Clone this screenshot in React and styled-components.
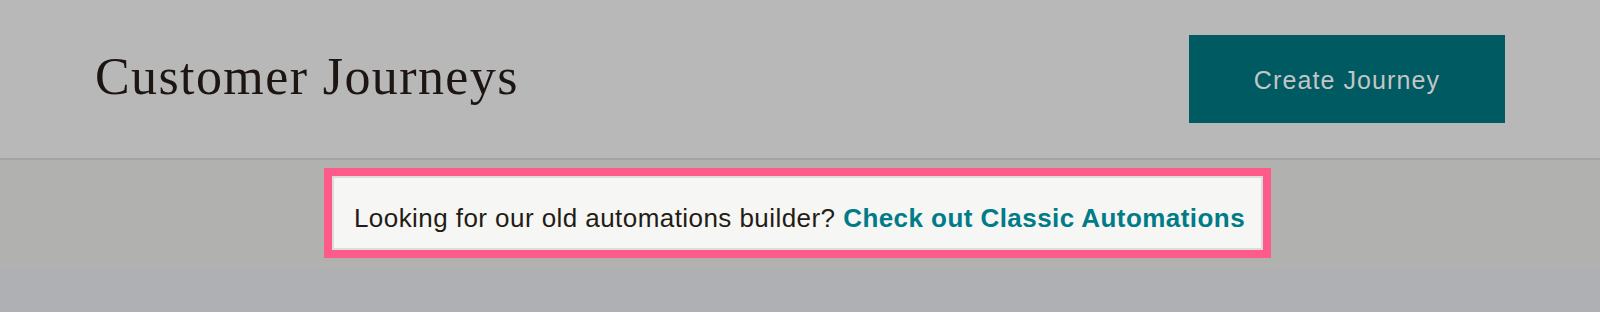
import React from "react";
import styled, { createGlobalStyle } from "styled-components";

const GlobalStyle = createGlobalStyle`
  html, body {
    margin: 0;
    padding: 0;
    background: #aeb0b4;
  }
  body {
    font-family: "Liberation Sans", Arial, sans-serif;
  }
`;

const Page = styled.div`
  width: 1600px;
  min-height: 312px;
  background: #aeb0b4;
`;

const Header = styled.header`
  height: 158px;
  box-sizing: content-box;
  border-bottom: 2px solid #a4a4a4;
  background: #b8b8b8;
  display: flex;
  align-items: center;
  justify-content: space-between;
  padding: 0 95px;
`;

const Title = styled.h1`
  margin: 0 0 4px 0;
  font-family: "Liberation Serif", "Times New Roman", serif;
  font-weight: 400;
  font-size: 52px;
  line-height: 60px;
  letter-spacing: 1.4px;
  color: #1c1512;
`;

const PrimaryButton = styled.button`
  width: 316px;
  height: 88px;
  border: none;
  border-radius: 0;
  background: #005a61;
  color: #c3c6c6;
  font-family: "Liberation Sans", Arial, sans-serif;
  font-size: 25px;
  letter-spacing: 1.1px;
  line-height: 28px;
  padding: 2px 0 0;
  cursor: pointer;
`;

const Band = styled.div`
  height: 109px;
  background: #b1b1b0;
  display: flex;
  justify-content: center;
  align-items: flex-start;
  padding-top: 8px;
  box-sizing: border-box;
`;

const Highlight = styled.div`
  border: 8px solid #ff5b8a;
  margin-right: 5px;
`;

const Notice = styled.p`
  margin: 0;
  height: 74px;
  box-sizing: border-box;
  border: 2px solid #dcdcda;
  background: #f6f6f4;
  padding: 26px 16px 0 20px;
  font-family: "Liberation Sans", Arial, sans-serif;
  font-size: 26px;
  line-height: 29px;
  letter-spacing: 0.44px;
  color: #241c15;
  white-space: nowrap;
`;

const Link = styled.a`
  color: #007c89;
  font-weight: 700;
  text-decoration: none;
`;

export default function App() {
  return (
    <>
      <GlobalStyle />
      <Page>
        <Header>
          <Title>Customer Journeys</Title>
          <PrimaryButton>Create Journey</PrimaryButton>
        </Header>
        <Band>
          <Highlight>
            <Notice>
              Looking for our old automations builder?{" "}
              <Link href="#">Check out Classic Automations</Link>
            </Notice>
          </Highlight>
        </Band>
      </Page>
    </>
  );
}
